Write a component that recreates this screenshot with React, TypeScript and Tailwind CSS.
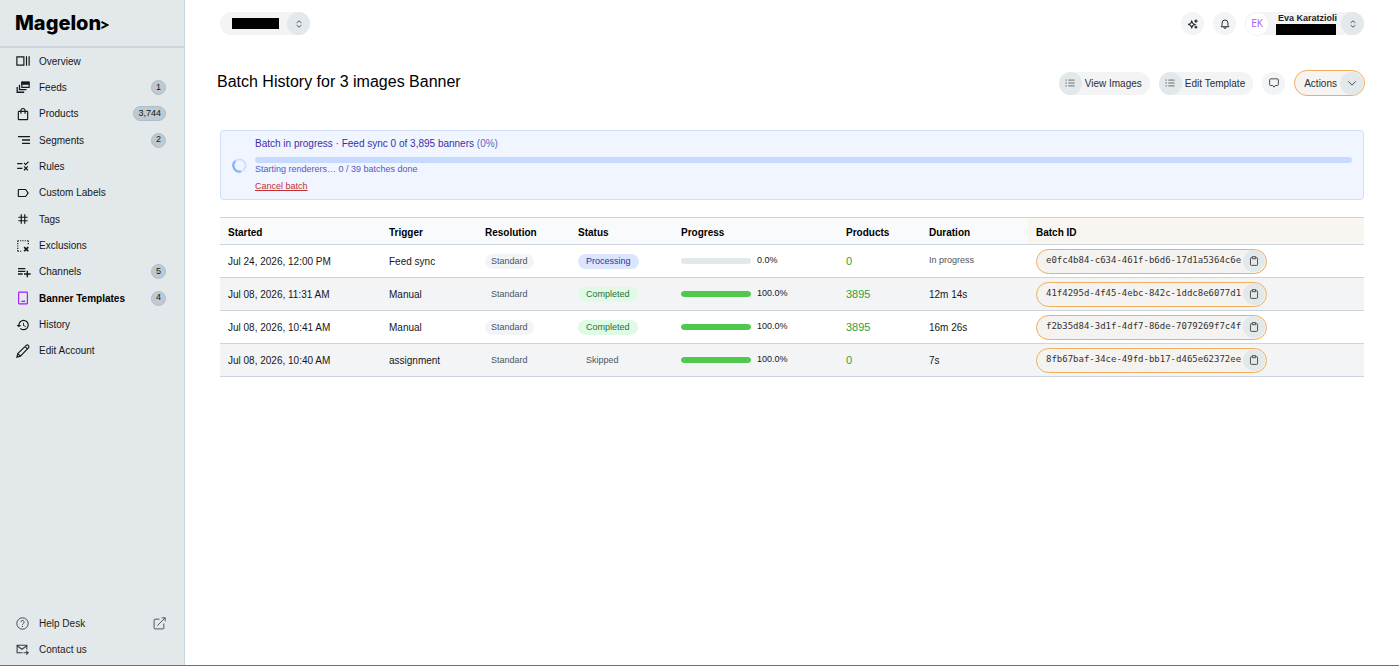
import type { ReactNode } from 'react'
import {
  MdHistory,
  MdLabelOutline,
  MdOutlineRule,
  MdOutlineSegment,
  MdPlaylistAdd,
  MdTag,
} from 'react-icons/md'

interface NavItem {
  label: string
  icon: ReactNode
  count?: string
  active?: boolean
}

interface Batch {
  id: string
  started: string
  trigger: string
  status: 'Processing' | 'Completed' | 'Skipped'
  progress: number
  products: number
  duration: string
}

function Icon({ children, className = 'size-3.5' }: { children: ReactNode; className?: string }) {
  return (
    <svg
      viewBox="0 0 24 24"
      fill="none"
      stroke="currentColor"
      strokeWidth="2"
      className={className}
      aria-hidden="true"
    >
      {children}
    </svg>
  )
}

const navItems: NavItem[] = [
  {
    label: 'Overview',
    icon: (
      <Icon>
        <path d="M1.5 5h12v14h-12zM18 4v16M22.5 4v16" />
      </Icon>
    ),
  },
  {
    label: 'Feeds',
    icon: (
      <Icon>
        <path d="M10 3.500h12.500v9H10z" />
        <path d="M10 4h12v3H10z" fill="currentColor" />
        <path d="M6 8v8.500h12M2 12v9h12" strokeWidth="2.200" />
      </Icon>
    ),
    count: '1',
  },
  {
    label: 'Products',
    icon: (
      <Icon>
        <path d="M5 7.500h14q1 0 1 1v12q0 1-1 1H5q-1 0-1-1v-12q0-1 1-1zM8.500 11.500V6a3.500 3.500 0 0 1 7 0v5.500" />
      </Icon>
    ),
    count: '3,744',
  },
  { label: 'Segments', icon: <MdOutlineSegment className="size-4" />, count: '2' },
  { label: 'Rules', icon: <MdOutlineRule className="size-3.5" /> },
  { label: 'Custom Labels', icon: <MdLabelOutline className="size-3.5" /> },
  { label: 'Tags', icon: <MdTag className="size-3.5" /> },
  {
    label: 'Exclusions',
    icon: (
      <Icon>
        <path d="M3 3h18M3 3v18M21 3v8M3 21h8" strokeDasharray="2 2" />
        <path d="m14 14 7 7M21 14l-7 7" strokeWidth="3" />
      </Icon>
    ),
  },
  { label: 'Channels', icon: <MdPlaylistAdd className="size-4" />, count: '5' },
  {
    label: 'Banner Templates',
    icon: (
      <Icon className="size-3.5 text-[#9d1ff5]">
        <path d="M5.500 2h13q1 0 1 1v18q0 1-1 1h-13q-1 0-1-1V3q0-1 1-1z" />
        <path d="M8.500 19l2.500-3 1.500 1.500 1.500-2 2 3.500z" fill="currentColor" stroke="none" />
      </Icon>
    ),
    count: '4',
    active: true,
  },
  { label: 'History', icon: <MdHistory className="size-3.5" /> },
  {
    label: 'Edit Account',
    icon: (
      <Icon>
        <path
          d="m1.500 22.500 1.500-6L18 2q1.500-1 3 .5t1 3.500L7.500 21zM3 16.500l4.500 4.500M15.500 4.500l4 4"
          strokeWidth="1.900"
        />
      </Icon>
    ),
  },
]

const batches: Batch[] = [
  {
    id: 'e0fc4b84-c634-461f-b6d6-17d1a5364c6e',
    started: 'Jul 24, 2026, 12:00 PM',
    trigger: 'Feed sync',
    status: 'Processing',
    progress: 0,
    products: 0,
    duration: 'In progress',
  },
  {
    id: '41f4295d-4f45-4ebc-842c-1ddc8e6077d1',
    started: 'Jul 08, 2026, 11:31 AM',
    trigger: 'Manual',
    status: 'Completed',
    progress: 100,
    products: 3895,
    duration: '12m 14s',
  },
  {
    id: 'f2b35d84-3d1f-4df7-86de-7079269f7c4f',
    started: 'Jul 08, 2026, 10:41 AM',
    trigger: 'Manual',
    status: 'Completed',
    progress: 100,
    products: 3895,
    duration: '16m 26s',
  },
  {
    id: '8fb67baf-34ce-49fd-bb17-d465e62372ee',
    started: 'Jul 08, 2026, 10:40 AM',
    trigger: 'assignment',
    status: 'Skipped',
    progress: 100,
    products: 0,
    duration: '7s',
  },
]

const statusStyles: Record<Batch['status'], string> = {
  Processing: 'bg-[#dbe6fe] text-[#3730a3]',
  Completed: 'bg-[#dffbe6] text-[#2f6b3c]',
  Skipped: 'bg-[#f3f4f6] text-[#4b5563]',
}

function UpDownIcon() {
  return (
    <Icon className="size-2 text-[#33373b]">
      <path d="m5 8.500 7-6 7 6M5 15.500l7 6 7-6" strokeWidth="2.500" />
    </Icon>
  )
}

function ListIcon() {
  return (
    <Icon className="size-2.5 text-[#4d5359]">
      <path d="M8 5h15M8 12h15M8 19h15M1 5h3.500M1 12h3.500M1 19h3.500" />
    </Icon>
  )
}

function Sidebar() {
  return (
    <aside className="flex w-[185px] shrink-0 flex-col border-r border-[#c9d3dc] bg-[#e3e8eb]">
      <div className="flex h-12 items-center border-b-2 border-[#cbd5dd] pl-[15px] font-[Inter] text-xl font-extrabold text-black">
        <a href="#" className="flex items-center">
          Magelon
          <svg viewBox="0 0 9 9" className="mt-1 size-2" fill="none" stroke="currentColor" strokeWidth="2.200" aria-hidden="true">
            <path d="M.5 1 7 4.500.5 8" />
          </svg>
        </a>
      </div>
      <nav className="flex h-[316px] flex-col justify-between">
        {navItems.map((item) => (
          <a key={item.label} href="#" className="flex h-[26px] items-center pr-[18px] pl-4">
            <span className="flex w-[23px] shrink-0 items-center">{item.icon}</span>
            <span className={item.active ? 'font-bold text-black' : ''}>{item.label}</span>
            {item.count && (
              <span className="ml-auto flex h-[15px] items-center rounded-full border border-[#b0bdc7] bg-[#bfc9d1] px-1 text-[9px]">
                {item.count}
              </span>
            )}
          </a>
        ))}
      </nav>
      <div className="mt-auto pb-[3px] text-[#1c1e20]">
        <a href="#" className="flex h-[26px] items-center pr-[18px] pl-4">
          <span className="w-[23px]">
            <Icon className="size-[13px] text-[#3a3f44]">
              <g strokeWidth="1.700">
                <circle cx="12" cy="12" r="10.500" />
                <path d="M9 9.500a3 3 0 1 1 4.500 2.600Q12 13 12 14.500M12 16.500v2" />
              </g>
            </Icon>
          </span>
          Help Desk
          <Icon className="ml-auto size-[13px] text-[#4d5359]">
            <path d="M12 4H3.500Q2 4 2 5.500v15Q2 22 3.500 22h15q1.500 0 1.500-1.500V12M8 16 22.500 1.500M16 1.500h6.500V8" strokeWidth="1.800" />
          </Icon>
        </a>
        <a href="#" className="flex h-[26px] items-center pl-4">
          <span className="w-[23px]">
            <Icon className="size-[13px] text-[#3a3f44]">
              <path d="M12 18H2V4h18v8M2 5l9 6.500L20 5M14 18h8M19 14.500l3.500 3.500-3.500 3.500" />
            </Icon>
          </span>
          Contact us
        </a>
      </div>
    </aside>
  )
}

function TopBar() {
  return (
    <header className="flex h-[23px] items-center">
      <button className="flex h-[23px] w-[90px] items-center justify-between rounded-full bg-[#f3f4f6] pl-3" aria-label="Switch account">
        <span className="h-[11px] w-[47px] bg-black" />
        <span className="flex size-[23px] items-center justify-center rounded-full bg-[#e3e8eb]">
          <UpDownIcon />
        </span>
      </button>
      <div className="ml-auto flex items-center gap-[9px]">
        <button className="flex size-[23px] items-center justify-center rounded-full bg-[#f3f4f6]" aria-label="Assistant">
          <Icon className="size-2.5 text-[#222529]">
            <path d="m9 5 2.500 5.500L17 13l-5.500 2.500L9 21l-2.500-5.500L1 13l5.500-2.500z" strokeWidth="2.500" />
            <path d="M19 1v8M15 5h8M19 16v7M15.500 19.500h7" strokeWidth="3" />
          </Icon>
        </button>
        <button className="flex size-[23px] items-center justify-center rounded-full bg-[#f3f4f6]" aria-label="Notifications">
          <Icon className="size-2.5 text-[#222529]">
            <path d="M2.500 18.500h19L19 15V9.500a7 7 0 0 0-14 0V15zM9 19.500a3 3 0 0 0 6 0" strokeWidth="2.300" />
          </Icon>
        </button>
        <button className="flex h-[23px] w-[119px] items-center rounded-full bg-[#f3f4f6]" aria-label="Eva Karatzioli">
          <span className="flex size-6 shrink-0 items-center justify-center rounded-full border border-[#f3f4f6] bg-white font-['Open_Sans',sans-serif] text-[10px] text-[#a855f7]">
            EK
          </span>
          <span className="ml-[7px] flex flex-col items-start leading-3">
            <span className="pl-0.5 text-[9px] font-bold whitespace-nowrap text-[#222]">Eva Karatzioli</span>
            <span className="h-[11px] w-[60px] bg-black" />
          </span>
          <span className="ml-auto flex size-[23px] shrink-0 items-center justify-center rounded-full bg-[#e3e8eb]">
            <UpDownIcon />
          </span>
        </button>
      </div>
    </header>
  )
}

function PageHeader() {
  return (
    <div className="mt-[35px] flex h-[26px] items-center">
      <h1 className="-ml-[3px] pb-0.5 text-base whitespace-nowrap text-black">Batch History for 3 images Banner</h1>
      <div className="ml-auto flex items-center gap-[9px] text-[#2b2e31]">
        {['View Images', 'Edit Template'].map((label) => (
          <button key={label} className="flex h-[23px] items-center rounded-full bg-[#f3f4f6] pr-2 whitespace-nowrap">
            <span className="mr-[3px] flex size-[23px] items-center justify-center rounded-full bg-[#e3e8eb]">
              <ListIcon />
            </span>
            {label}
          </button>
        ))}
        <button className="flex size-[23px] items-center justify-center rounded-full bg-[#f3f4f6]" aria-label="Comments">
          <Icon className="size-2.5">
            <path d="M4 2h16q2.500 0 2.500 2.500v11Q22.500 18 20 18h-5l-3 4-3-4H4q-2.500 0-2.500-2.500v-11Q1.500 2 4 2z" />
          </Icon>
        </button>
        <button className="-mr-px flex h-[26px] items-center rounded-full border border-[#f3ad5c] bg-[repeating-linear-gradient(135deg,#f3f4f6_0_2px,#f8f3ed_2px_4px)] pr-px pl-[9px]">
          Actions
          <span className="ml-[3px] flex size-[23px] items-center justify-center rounded-full bg-[#e3e8eb]">
            <Icon className="size-2.5">
              <path d="m3 8 9 9 9-9" />
            </Icon>
          </span>
        </button>
      </div>
    </div>
  )
}

function BatchProgress() {
  return (
    <section className="mt-[34px] flex h-[70px] items-center rounded border border-[#cfdffd] bg-[#f0f5ff] px-[11px]">
      <svg viewBox="0 0 16 16" className="size-[15px] shrink-0" fill="none" strokeWidth="2" aria-hidden="true">
        <circle cx="8" cy="8" r="6.500" stroke="#cddefe" />
        <path d="M9.500 14.300A6.500 6.500 0 0 1 3.400 3.400" stroke="#8db3fb" strokeWidth="2.500" />
      </svg>
      <div className="ml-2 flex-1">
        <p className="h-[19px] leading-3 text-[#3a2fa8]">
          Batch in progress · Feed sync 0 of 3,895 banners <span className="text-[#6465bd]">(0%)</span>
        </p>
        <div className="h-1.5 rounded-full bg-[#c6daff]" />
        <p className="text-[9px] leading-3 text-[#5558c4]">Starting renderers… 0 / 39 batches done</p>
        <button className="mt-[5px] block text-[9px] leading-3 text-[#c53030] underline">Cancel batch</button>
      </div>
    </section>
  )
}

function BatchTable() {
  return (
    <table className="mt-[17px] w-full table-fixed border-collapse text-left whitespace-nowrap">
      <colgroup>
        <col className="w-[161px]" />
        <col className="w-24" />
        <col className="w-[93px]" />
        <col className="w-[103px]" />
        <col className="w-[165px]" />
        <col className="w-[83px]" />
        <col className="w-[107px]" />
        <col />
      </colgroup>
      <thead>
        <tr className="h-[27px] border-y border-[#ccd5dd] bg-[#f9fafb] text-black">
          {['Started', 'Trigger', 'Resolution', 'Status', 'Progress', 'Products', 'Duration'].map((name) => (
            <th key={name} className="px-2 pt-0.5 font-bold">
              {name}
            </th>
          ))}
          <th className="bg-[#f9f5f0] px-2 pt-0.5 font-bold">Batch ID</th>
        </tr>
      </thead>
      <tbody>
        {batches.map((batch) => (
          <tr key={batch.id} className="h-[33px] border-b border-[#ccd5dd] even:bg-[#f3f4f6]">
            <td className="px-2">{batch.started}</td>
            <td className="px-2">{batch.trigger}</td>
            <td className="px-2">
              <span className="inline-flex h-[15px] items-center rounded-full bg-[#f3f4f6] px-1.5 align-middle text-[9px] text-[#4b5563]">
                Standard
              </span>
            </td>
            <td className="px-2">
              <span className={`inline-flex h-[15px] items-center rounded-full px-2 align-middle text-[9px] ${statusStyles[batch.status]}`}>
                {batch.status}
              </span>
            </td>
            <td className="px-2">
              <div className="flex items-center gap-1.5 text-[9px]">
                <div className="h-1.5 w-[70px] overflow-hidden rounded-full bg-[#e3e8eb]">
                  <div className="h-full rounded-full bg-[#50c84e]" style={{ width: `${batch.progress}%` }} />
                </div>
                {batch.progress.toFixed(1)}%
              </div>
            </td>
            <td className="px-2 text-[11px] text-[#35a035]">{batch.products}</td>
            <td className={batch.status === 'Processing' ? 'px-2 text-[9px] text-[#4f5357]' : 'px-2'}>{batch.duration}</td>
            <td className="px-2">
              <button
                className="flex h-[25px] w-[231px] items-center justify-between rounded-full border border-[#f3ad5c] bg-[repeating-linear-gradient(135deg,#f3f4f6_0_2px,#f6f1eb_2px_4px)] pr-px pl-[9px] font-['DejaVu_Sans_Mono',monospace] text-[9px] text-[#333]"
                aria-label={`Copy ${batch.id}`}
              >
                {batch.id}
                <span className="flex size-[22px] items-center justify-center rounded-full bg-[#e3e8eb]">
                  <Icon className="size-2.5">
                    <path d="M8 4H5.500q-2 0-2 2v14.500q0 2 2 2h13q2 0 2-2V6q0-2-2-2H16" />
                    <path d="M8 1.500h8v5H8z" />
                  </Icon>
                </span>
              </button>
            </td>
          </tr>
        ))}
      </tbody>
    </table>
  )
}

export default function App() {
  return (
    <div className="flex min-h-screen border-b border-[#6b7075] bg-white font-['Liberation_Sans',Arial,sans-serif] text-[10px] text-[#15171a]">
      <Sidebar />
      <main className="min-w-0 flex-1 px-[35px] pt-3">
        <TopBar />
        <PageHeader />
        <BatchProgress />
        <BatchTable />
      </main>
    </div>
  )
}
